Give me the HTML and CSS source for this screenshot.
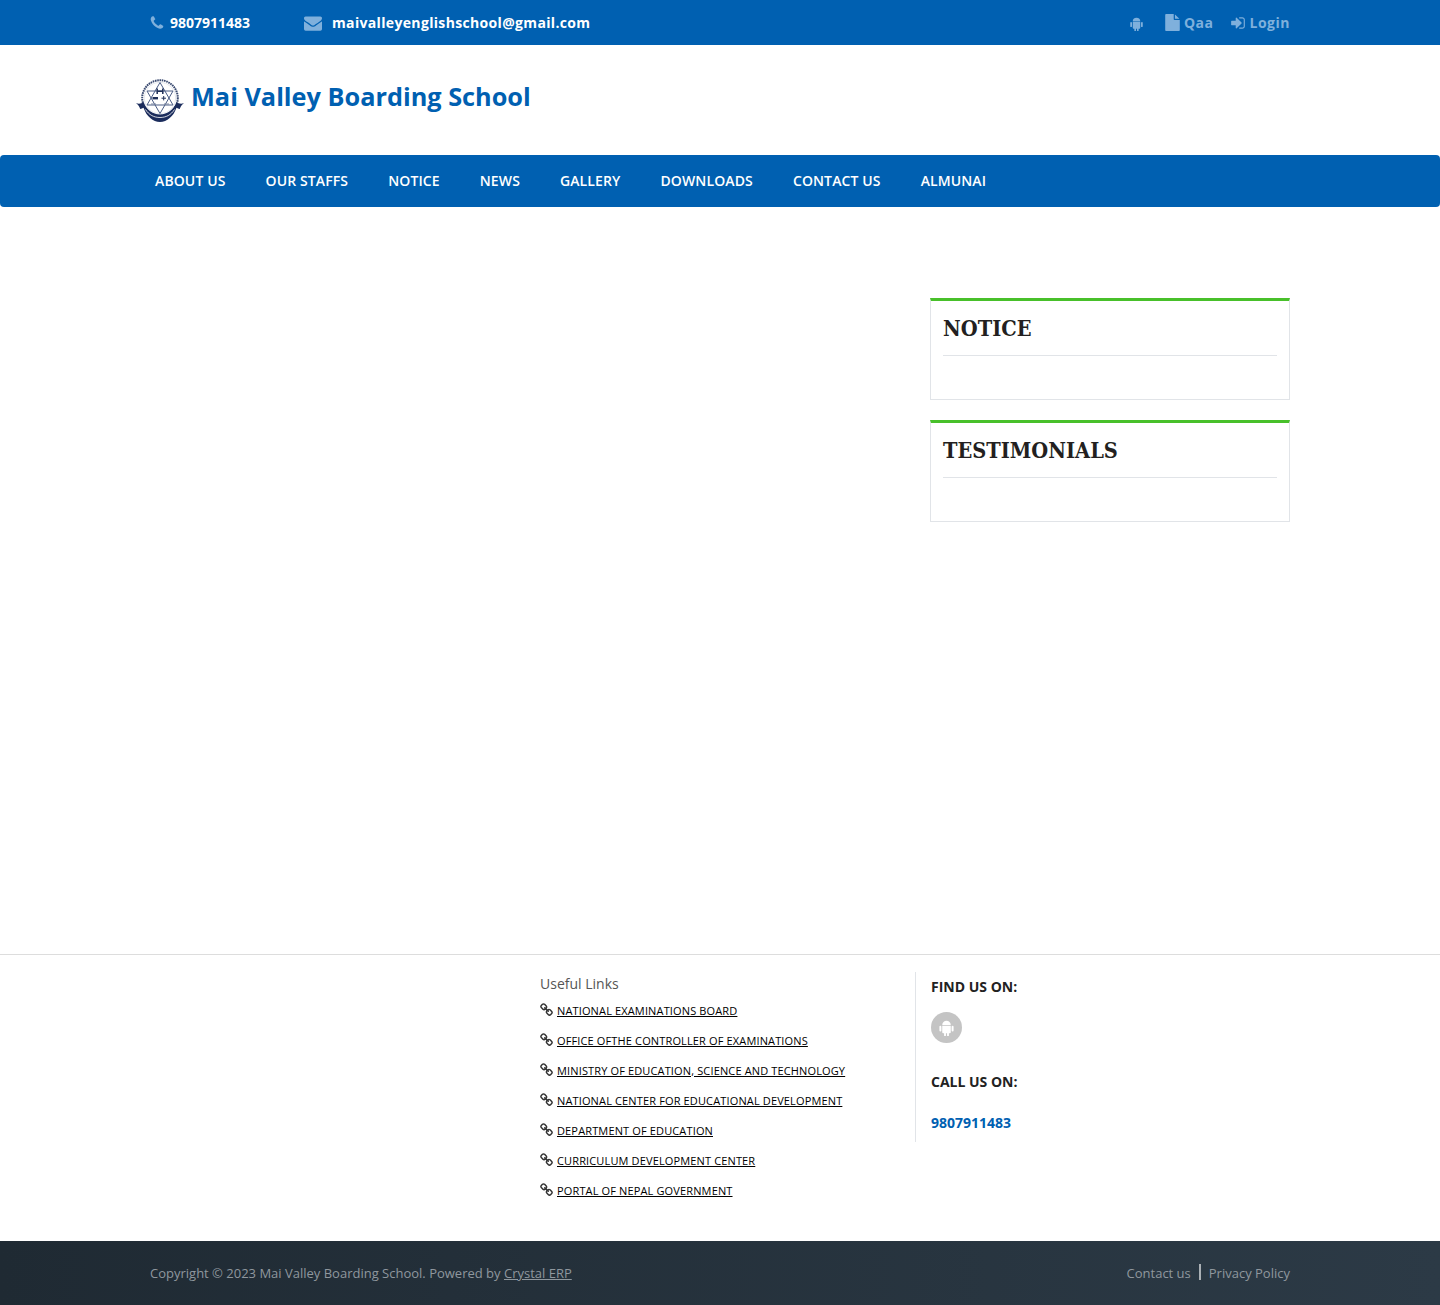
FILE: index.html
```html
<!DOCTYPE html>
<html lang="en">
<head>
  <meta charset="UTF-8">
  <title>Mai Valley Boarding School</title>
  <link rel="stylesheet" href="styles.css">
</head>
<body>

<svg class="sprite" xmlns="http://www.w3.org/2000/svg">
  <symbol id="i-phone" viewBox="0 0 1792 1792"><path d="M1600 1240q0 27-10 70.5t-21 68.5q-21 50-122 106-94 51-186 51-27 0-53-3.5t-57.5-12.5-47-14.5-55.5-20.5-49-18q-98-35-175-83-127-79-264-216t-216-264q-48-77-83-175-3-9-18-49t-20.5-55.5-14.5-47-12.5-57.5-3.5-53q0-92 51-186 56-101 106-122 25-11 68.5-21t70.5-10q14 0 21 3 18 6 53 76 11 19 30 54t35 63.5 31 53.5q3 4 17.5 25t21.5 35.5 7 28.5q0 20-28.5 50t-62 55-62 53-28.5 46q0 9 5 22.5t8.5 20.5 14 24 11.5 19q76 137 174 235t235 174q2 1 19 11.5t24 14 20.5 8.5 22.5 5q18 0 46-28.5t53-62 55-62 50-28.5q14 0 28.5 7t35.5 21.5 25 17.5q25 15 53.5 31t63.5 35 54 30q70 35 76 53 3 7 3 21z"/></symbol>
  <symbol id="i-mail" viewBox="0 0 1792 1792"><path d="M1792 710v794q0 66-47 113t-113 47h-1472q-66 0-113-47t-47-113v-794q44 49 101 87 362 246 497 345 57 42 92.5 65.5t94.5 48 110 24.5h2q51 0 110-24.5t94.5-48 92.5-65.5q170-123 498-345 57-39 100-87zm0-294q0 79-49 151t-122 123q-376 261-468 325-10 7-42.5 30.5t-54 38-52 32.5-57.5 27-50 9h-2q-23 0-50-9t-57.5-27-52-32.5-54-38-42.5-30.5q-91-64-262-182.5t-205-142.5q-62-42-117-115.5t-55-136.5q0-78 41.5-130t118.5-52h1472q65 0 112.5 47t47.5 113z"/></symbol>
  <symbol id="i-android" viewBox="0 0 24 24"><path d="M6 8.600a6 6 0 0 1 12 0z"/><path d="M6 9.600h12v9.200a1.400 1.400 0 0 1-1.400 1.400h-1.200v3a1.300 1.300 0 0 1-2.600 0v-3h-1.600v3a1.300 1.300 0 0 1-2.600 0v-3H7.400A1.400 1.400 0 0 1 6 18.800z"/><rect x="2" y="9.400" width="2.800" height="8.200" rx="1.400"/><rect x="19.200" y="9.400" width="2.800" height="8.200" rx="1.400"/></symbol>
  <symbol id="i-file" viewBox="0 0 1536 1792"><path d="M1024 512v-472q22 14 36 28l408 408q14 14 28 36h-472zm-128 32q0 40 28 68t68 28h544v1056q0 40-28 68t-68 28h-1344q-40 0-68-28t-28-68v-1600q0-40 28-68t68-28h800v544z"/></symbol>
  <symbol id="i-login" viewBox="0 0 1536 1792"><path d="M1184 896q0 26-19 45l-544 544q-19 19-45 19t-45-19-19-45v-288h-448q-26 0-45-19t-19-45v-384q0-26 19-45t45-19h448v-288q0-26 19-45t45-19 45 19l544 544q19 19 19 45zm352-352v704q0 119-84.500 203.500t-203.500 84.500h-320q-13 0-22.500-9.500t-9.500-22.500q0-4-1-20t-.5-26.500 3-23.500 10-19.500 20.500-6.500h320q66 0 113-47t47-113v-704q0-66-47-113t-113-47h-312l-11.500-1-11.500-3-8-5.500-7-9-2-13.500q0-4-1-20t-.5-26.500 3-23.500 10-19.500 20.500-6.500h320q119 0 203.500 84.500t84.500 203.500z"/></symbol>
  <symbol id="i-link" viewBox="0 0 1792 1792"><path d="M1456 1216q0-40-28-68l-208-208q-28-28-68-28-42 0-72 32 3 3 19 18.500t21.500 21.500 15 19 13 25.500 3.500 27.500q0 40-28 68t-68 28q-15 0-27.500-3.500t-25.500-13-19-15-21.500-21.500-18.500-19q-33 31-33 73 0 40 28 68l206 207q27 27 68 27 40 0 68-26l147-146q28-28 28-67zm-703-705q0-40-28-68l-206-207q-28-28-68-28-39 0-68 27l-147 146q-28 28-28 67 0 40 28 68l208 208q27 27 68 27 42 0 72-31-3-3-19-18.500t-21.500-21.500-15-19-13-25.500-3.500-27.500q0-40 28-68t68-28q15 0 27.500 3.500t25.500 13 19 15 21.500 21.500 18.500 19q33-31 33-73zm895 705q0 120-85 203l-147 146q-83 83-203 83-121 0-204-85l-206-207q-83-83-83-203 0-123 88-209l-88-88q-86 88-208 88-120 0-204-84l-208-208q-84-84-84-204t85-203l147-146q83-83 203-83 121 0 204 85l206 207q83 83 83 203 0 123-88 209l88 88q86-88 208-88 120 0 204 84l208 208q84 84 84 204z"/></symbol>
</svg>

<!-- top strip -->
<div class="topbar">
  <div class="container topbar-row">
    <div class="contact">
      <span class="contact-phone"><svg class="icon icon-phone"><use href="#i-phone"/></svg>9807911483</span>
      <span class="contact-mail"><svg class="icon icon-mail"><use href="#i-mail"/></svg>maivalleyenglishschool@gmail.com</span>
    </div>
    <div class="toplinks">
      <a href="#" class="app-link"><svg class="icon icon-android"><use href="#i-android"/></svg></a>
      <a href="#"><svg class="icon icon-file"><use href="#i-file"/></svg>Qaa</a>
      <a href="#" class="login-link"><svg class="icon icon-login"><use href="#i-login"/></svg>Login</a>
    </div>
  </div>
</div>

<header class="brand">
  <svg class="logo" viewBox="0 0 48 44" xmlns="http://www.w3.org/2000/svg">
    <circle cx="24" cy="19" r="17.800" fill="none" stroke="#3a4a70" stroke-width="2" stroke-dasharray="1.600 .7"/>
    <circle cx="24" cy="19" r="15.800" fill="#fff" stroke="#d4d9e3" stroke-width=".6"/>
    <path d="M24 3.500 37 26H11zM24 34.500 11 12H37z" fill="#fff" stroke="#4a5c85" stroke-width="1"/>
    <path d="M21.200 9.500v5.500M26.800 9.500v5.500M21.200 12.200h5.600" stroke="#1f2f57" stroke-width="1.500" fill="none"/>
    <path d="M16.500 18h5.500v2.400h-5.500z" fill="#1f2f57"/>
    <path d="M25.500 19.200h4.500M27.700 17v4.400" stroke="#1f2f57" stroke-width="1"/>
    <path d="M15 25h5M28 25h5" stroke="#7f8aa3" stroke-width="1.200"/>
    <path d="M0 24c3 1.500 5.500.5 7.500-1 2.500 7.500 9 12.500 16.500 12.500S38 30.500 40.500 23c2 1.500 4.500 2.500 7.500 1-2 1.500-3.200 3.200-4.200 6-1.300-.2-2.300-.6-3.300-1.200C37.500 37.500 31 43 24 43S10.500 37.500 7.500 28.800c-1 .6-2 1-3.300 1.200C3.200 27.200 2 25.500 0 24z" fill="#1b2c5c"/>
    <path d="M9.500 30.500C13 36 18 38.500 24 38.500s11-2.500 14.500-8" fill="none" stroke="#fff" stroke-width=".8"/>
  </svg>
  <h1 class="school-name">Mai Valley Boarding School</h1>
</header>

<nav class="mainnav">
  <ul class="container nav-list">
    <li><a href="#">ABOUT US</a></li>
    <li><a href="#">OUR STAFFS</a></li>
    <li><a href="#">NOTICE</a></li>
    <li><a href="#">NEWS</a></li>
    <li><a href="#">GALLERY</a></li>
    <li><a href="#">DOWNLOADS</a></li>
    <li><a href="#">CONTACT US</a></li>
    <li><a href="#">ALMUNAI</a></li>
  </ul>
</nav>

<main class="container content">
  <aside class="sidebar">
    <section class="card">
      <h3>NOTICE</h3>
    </section>
    <section class="card">
      <h3>TESTIMONIALS</h3>
    </section>
  </aside>
</main>

<footer class="site-footer">
  <div class="footer-cols">
    <div class="footer-col"></div>
    <div class="footer-col">
      <h4 class="links-title">Useful Links</h4>
      <ul class="links">
        <li><svg class="icon"><use href="#i-link"/></svg><a href="#">NATIONAL EXAMINATIONS BOARD</a></li>
        <li><svg class="icon"><use href="#i-link"/></svg><a href="#">OFFICE OFTHE CONTROLLER OF EXAMINATIONS</a></li>
        <li><svg class="icon"><use href="#i-link"/></svg><a href="#">MINISTRY OF EDUCATION, SCIENCE AND TECHNOLOGY</a></li>
        <li><svg class="icon"><use href="#i-link"/></svg><a href="#">NATIONAL CENTER FOR EDUCATIONAL DEVELOPMENT</a></li>
        <li><svg class="icon"><use href="#i-link"/></svg><a href="#">DEPARTMENT OF EDUCATION</a></li>
        <li><svg class="icon"><use href="#i-link"/></svg><a href="#">CURRICULUM DEVELOPMENT CENTER</a></li>
        <li><svg class="icon"><use href="#i-link"/></svg><a href="#">PORTAL OF NEPAL GOVERNMENT</a></li>
      </ul>
    </div>
    <div class="footer-col find-us">
      <h5>FIND US ON:</h5>
      <a href="#" class="social"><svg class="icon"><use href="#i-android"/></svg></a>
      <h5 class="call-title">CALL US ON:</h5>
      <a href="#" class="call-number">9807911483</a>
    </div>
  </div>

  <div class="copyright">
    <div class="container copyright-row">
      <p>Copyright © 2023 Mai Valley Boarding School. Powered by <a href="#" class="erp">Crystal ERP</a></p>
      <p class="legal"><a href="#">Contact us</a><span class="pipe"></span><a href="#">Privacy Policy</a></p>
    </div>
  </div>
</footer>

</body>
</html>
```

FILE: styles.css
```css
* {
  box-sizing: border-box;
}

body {
  margin: 0;
  font-family: "Open Sans", sans-serif;
  font-size: 14px;
  color: #222;
  background: #fff;
}

a {
  color: inherit;
  text-decoration: none;
}

ul {
  list-style: none;
  margin: 0;
  padding: 0;
}

.sprite {
  display: none;
}

.icon {
  fill: currentColor;
  flex: none;
}

.container {
  width: 1140px;
  margin: 0 auto;
}

/* top strip */
.topbar {
  height: 45px;
  background: #0060b1;
  color: #fff;
}

.topbar-row {
  height: 45px;
  display: flex;
  justify-content: space-between;
  align-items: center;
  font-weight: 700;
  font-size: 14px;
}

.contact {
  display: flex;
}

.contact span {
  display: flex;
  align-items: center;
}

.contact .icon {
  color: #7fb0dc;
}

.contact-phone {
  width: 154px;
}

.icon-phone {
  width: 16px;
  height: 16px;
  margin: 0 5px 0 -1px;
}

.icon-mail {
  width: 18px;
  height: 18px;
  margin-right: 10px;
}

.contact-mail {
  letter-spacing: 0.34px;
}

.toplinks {
  display: flex;
  align-items: center;
  color: #7fb0dc;
  letter-spacing: 0.5px;
}

.toplinks a {
  display: flex;
  align-items: center;
  margin-left: 18px;
}

.toplinks .login-link {
  margin-left: 16px;
}

.app-link {
  margin-right: 3px;
}

.icon-android {
  width: 15px;
  height: 15px;
  margin-top: 2px;
}

.icon-file {
  width: 15px;
  height: 17px;
  margin-right: 4px;
}

.icon-login {
  width: 16px;
  height: 16px;
  margin-right: 4px;
}

/* logo + name */
.brand {
  width: 1170px;
  height: 110px;
  margin: 0 auto;
  display: flex;
  align-items: center;
  padding-left: 1px;
}

.logo {
  width: 48px;
  height: 44px;
  margin: 2px 7px 0 0;
}

.school-name {
  margin: 0 0 8px;
  font-size: 25.3px;
  font-weight: 700;
  color: #0060b1;
}

/* main menu */
.mainnav {
  height: 52px;
  background: #0060b1;
  border-radius: 4px;
}

.nav-list {
  display: flex;
  padding-left: 5px;
  gap: 40px;
}

.nav-list a {
  display: block;
  line-height: 52px;
  font-size: 14px;
  font-weight: 600;
  letter-spacing: 0.12px;
  color: #fff;
}

.content {
  min-height: 747px;
  padding-top: 91px;
  display: flex;
  justify-content: flex-end;
}

.sidebar {
  width: 360px;
}

.card {
  height: 102px;
  margin-bottom: 20px;
  padding: 0 12px;
  border: 1px solid #e1e4e8;
  border-top: 3px solid #48c02a;
}

.card h3 {
  margin: 0;
  height: 55px;
  line-height: 55px;
  font-family: "DejaVu Serif Condensed", "DejaVu Serif", serif;
  font-stretch: condensed;
  font-size: 21.6px;
  font-weight: 700;
  color: #231f20;
  border-bottom: 1px solid #e1e4e8;
}

/* footer */
.site-footer {
  border-top: 1px solid #ddd;
}

.footer-cols {
  width: 1170px;
  height: 286px;
  margin: 0 auto;
  display: grid;
  grid-template-columns: 390px 390px 390px;
  padding-top: 17px;
  align-items: start;
}

.footer-col:nth-child(2) {
  padding-left: 15px;
}

.links-title {
  margin: 0 0 -1px;
  font-size: 14px;
  font-weight: 400;
  line-height: 24px;
  color: #555;
}

.links li {
  display: flex;
  align-items: center;
  height: 30px;
  color: #333;
}

.links .icon {
  width: 14px;
  height: 14px;
  margin: -1px 3px 0 0;
}

.links a {
  font-size: 11px;
  letter-spacing: 0.14px;
  color: #000;
  text-decoration: underline;
}

.find-us {
  height: 170px;
  border-left: 1px solid #e1e4e8;
  padding-left: 15px;
}

.find-us h5 {
  margin: 0;
  padding-top: 5px;
  font-size: 14px;
  line-height: 20px;
  font-weight: 700;
  color: #222;
}

.social {
  display: flex;
  align-items: center;
  justify-content: center;
  width: 31px;
  height: 31px;
  margin-top: 15px;
  border-radius: 50%;
  background: #c4c4c4;
  color: #fff;
}

.social .icon {
  width: 17px;
  height: 17px;
}

.find-us .call-title {
  margin-top: 24px;
}

.call-number {
  display: block;
  margin-top: 21px;
  font-weight: 700;
  color: #0060b1;
}

.copyright {
  height: 64px;
  background: linear-gradient(to right, #1f2a33, #2c3a46);
  color: #8f979e;
  font-size: 13px;
}

.copyright-row {
  height: 64px;
  display: flex;
  justify-content: space-between;
  align-items: center;
}

.copyright p {
  margin: 0;
}

.legal {
  display: flex;
  align-items: center;
}

.erp {
  text-decoration: underline;
}

.pipe {
  width: 2px;
  height: 16px;
  margin: -2px 8px 0 8px;
  background: #aab0b5;
}
```
